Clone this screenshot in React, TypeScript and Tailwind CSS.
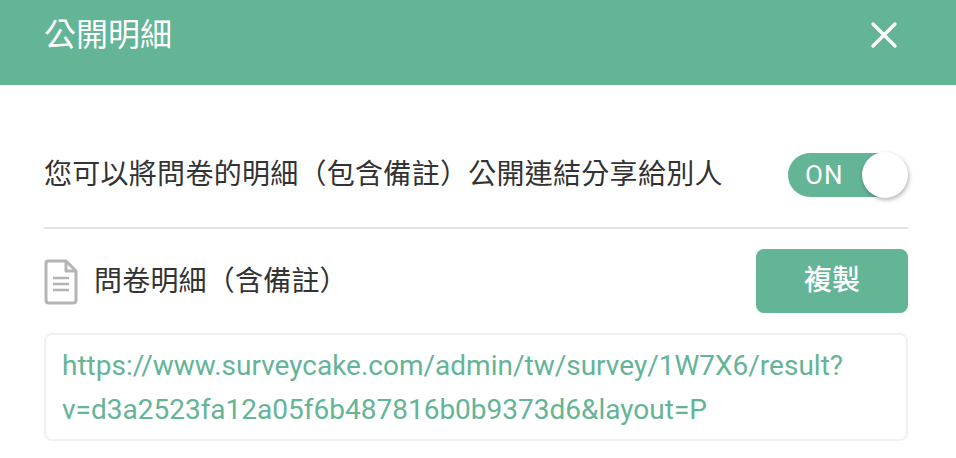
const cjk = "font-['Roboto','Noto_Sans_CJK_TC',sans-serif]";

function App() {
  return (
    <div className={`h-[458px] w-[956px] overflow-hidden bg-white ${cjk}`}>
      {/* Header */}
      <header className="flex h-[85px] items-center justify-between bg-[#64b496] pl-[44px] pr-[58px] pb-[16px]">
        <span className="text-[32px] leading-[44px] text-white">公開明細</span>
        <svg width="28" height="28" viewBox="0 0 28 28" className="mt-[1px]">
          <path d="M3 3 L25 25 M25 3 L3 25" stroke="#fff" strokeWidth="3.4" strokeLinecap="round" />
        </svg>
      </header>

      <main className="pl-[44px] pr-[48px]">
        {/* Public toggle */}
        <div className="flex h-[144px] items-center justify-between pt-[48px] pb-[10px] border-b-2 border-[#e2e2e4]">
          <span className="text-[28px] leading-[40px] tracking-[0.28px] text-[#333333]">
            您可以將問卷的明細（包含備註）公開連結分享給別人
          </span>
          <div className="relative flex h-[44px] w-[112px] mr-[8px] items-center rounded-full bg-[#64b496] pl-[17px]">
            <span className="text-[26px] leading-none tracking-[1px] text-white">ON</span>
            <div className="absolute right-[-8px] top-[-1px] h-[46px] w-[46px] rounded-full bg-white shadow-[1px_2px_4px_rgba(0,0,0,0.3)]" />
          </div>
        </div>

        {/* Detail row */}
        <div className="mt-[20px] flex h-[64px] items-center justify-between">
          <div className="flex items-center">
            <svg width="34" height="46" viewBox="0 0 34 46" className="mt-[2px]" fill="none" stroke="#b4b4b4">
              <path d="M4 2 H22 L32 12 V41 Q32 44 29 44 H5 Q2 44 2 41 V4 Q2 2 4 2 Z" strokeWidth="3" strokeLinejoin="round" />
              <path d="M22 2 V12 H32" strokeWidth="3" strokeLinejoin="round" />
              <path d="M9 19 H25 M9 25 H25 M9 31 H25" strokeWidth="2.6" />
            </svg>
            <span className="ml-[16px] mt-[2px] text-[28px] leading-[40px] tracking-[0.2px] text-[#333333]">問卷明細（含備註）</span>
          </div>
          <button className="h-[64px] w-[152px] rounded-lg bg-[#64b496] text-[28px] font-medium text-white">
            複製
          </button>
        </div>

        {/* Link box */}
        <div className="mt-[20px] h-[108px] rounded-lg border-2 border-[#f1f0f3] px-[16px] pt-[9px] text-[28px] leading-[44px] text-[#64b496]">
          https://www.surveycake.com/admin/tw/survey/1W7X6/result?
          <br />
          v=d3a2523fa12a05f6b487816b0b9373d6&amp;layout=P
        </div>
      </main>
    </div>
  );
}

export default App;
